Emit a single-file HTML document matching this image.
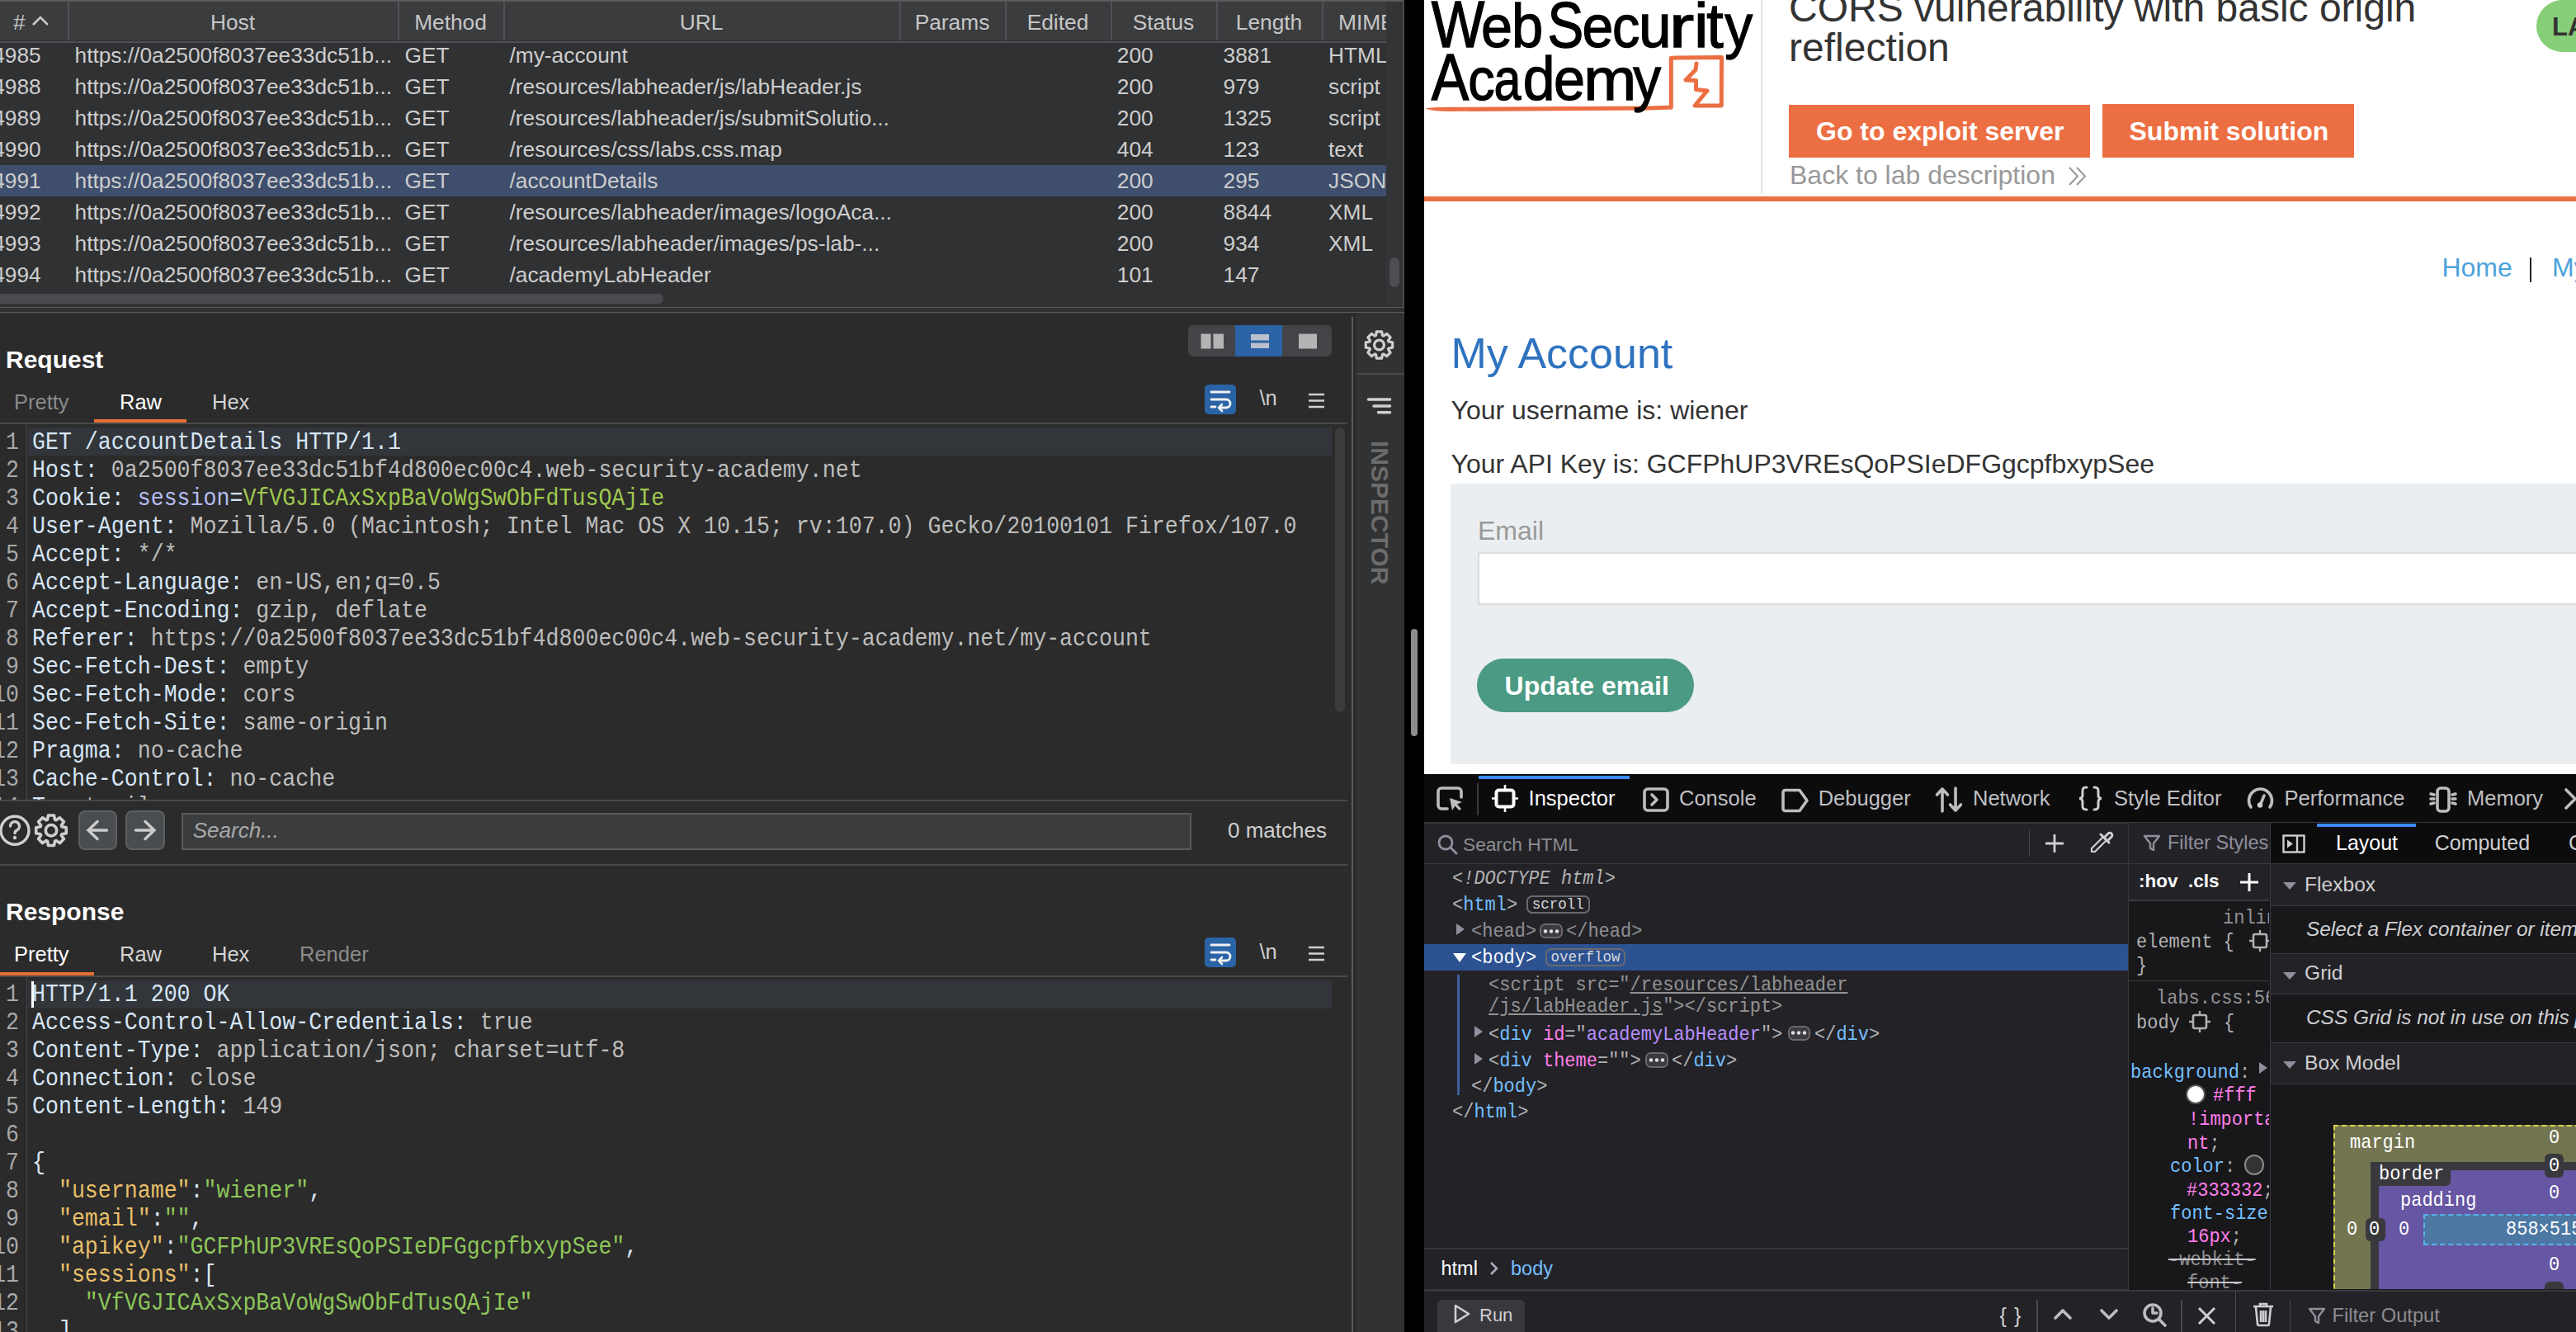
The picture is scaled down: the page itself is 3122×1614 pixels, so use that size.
<!DOCTYPE html>
<html><head><meta charset="utf-8"><style>
html,body{margin:0;padding:0;}
body{width:3122px;height:1614px;position:relative;overflow:hidden;background:#2b2b2b;}
.a{position:absolute;}
.t{position:absolute;white-space:pre;line-height:1;}
.s{font-family:"Liberation Sans", sans-serif;}
.m{font-family:"Liberation Mono", monospace;}
svg{position:absolute;overflow:visible;}
</style></head><body>
<div class="a" style="left:0px;top:0px;width:1702px;height:1614px;background:#2b2b2b;"></div>
<div class="a" style="left:0px;top:0px;width:1702px;height:380px;background:#303133;"></div>
<div class="a" style="left:0px;top:0px;width:1702px;height:2px;background:#5a5b5d;"></div>
<div class="a" style="left:0px;top:2px;width:1680px;height:47px;background:#3b3c3e;"></div>
<div class="a" style="left:0px;top:50px;width:1680px;height:2px;background:#505154;"></div>
<div class="a" style="left:82px;top:2px;width:2px;height:47px;background:#505154;"></div>
<div class="a" style="left:482px;top:2px;width:2px;height:47px;background:#505154;"></div>
<div class="a" style="left:610px;top:2px;width:2px;height:47px;background:#505154;"></div>
<div class="a" style="left:1090px;top:2px;width:2px;height:47px;background:#505154;"></div>
<div class="a" style="left:1218px;top:2px;width:2px;height:47px;background:#505154;"></div>
<div class="a" style="left:1346px;top:2px;width:2px;height:47px;background:#505154;"></div>
<div class="a" style="left:1474px;top:2px;width:2px;height:47px;background:#505154;"></div>
<div class="a" style="left:1602px;top:2px;width:2px;height:47px;background:#505154;"></div>
<div class="a" style="left:1680px;top:2px;width:20px;height:378px;background:#333436;"></div>
<div class="a" style="left:1700px;top:0px;width:2px;height:380px;background:#4a4b4d;"></div>
<div class="t s" style="left:16.00px;top:14.24px;font-size:26.3px;color:#c6c6c6;">#</div>
<svg class="a" style="left:38px;top:18px" width="22" height="14" viewBox="0 0 22 14"><path d="M2 12 L11 3 L20 12" stroke="#c9c9c9" stroke-width="2.6" fill="none"/></svg>
<div class="t s" style="left:82px;width:400px;text-align:center;top:14.24px;font-size:26.3px;color:#c6c6c6">Host</div>
<div class="t s" style="left:482px;width:128px;text-align:center;top:14.24px;font-size:26.3px;color:#c6c6c6">Method</div>
<div class="t s" style="left:610px;width:480px;text-align:center;top:14.24px;font-size:26.3px;color:#c6c6c6">URL</div>
<div class="t s" style="left:1090px;width:128px;text-align:center;top:14.24px;font-size:26.3px;color:#c6c6c6">Params</div>
<div class="t s" style="left:1218px;width:128px;text-align:center;top:14.24px;font-size:26.3px;color:#c6c6c6">Edited</div>
<div class="t s" style="left:1346px;width:128px;text-align:center;top:14.24px;font-size:26.3px;color:#c6c6c6">Status</div>
<div class="t s" style="left:1474px;width:128px;text-align:center;top:14.24px;font-size:26.3px;color:#c6c6c6">Length</div>
<div class="a" style="left:1604px;top:2px;width:76px;height:47px;overflow:hidden"><div class="t s" style="left:18px;top:12.24px;font-size:26.3px;color:#c6c6c6">MIME</div></div>
<div class="a" style="left:0;top:52px;width:1680px;height:304px;overflow:hidden">
<div class="t s" style="left:49.70px;top:1.74px;font-size:26.3px;color:#cdcdcd;left:-550.30px;width:600px;text-align:right;">4985</div>
<div class="t s" style="left:90.50px;top:1.74px;font-size:26.3px;color:#cdcdcd;">https://0a2500f8037ee33dc51b...</div>
<div class="t s" style="left:490.50px;top:1.74px;font-size:26.3px;color:#cdcdcd;">GET</div>
<div class="t s" style="left:617.50px;top:1.74px;font-size:26.3px;color:#cdcdcd;">/my-account</div>
<div class="t s" style="left:1353.75px;top:1.74px;font-size:26.3px;color:#cdcdcd;">200</div>
<div class="t s" style="left:1482.50px;top:1.74px;font-size:26.3px;color:#cdcdcd;">3881</div>
<div class="t s" style="left:1610.00px;top:1.74px;font-size:26.3px;color:#cdcdcd;">HTML</div>
<div class="t s" style="left:49.70px;top:39.74px;font-size:26.3px;color:#cdcdcd;left:-550.30px;width:600px;text-align:right;">4988</div>
<div class="t s" style="left:90.50px;top:39.74px;font-size:26.3px;color:#cdcdcd;">https://0a2500f8037ee33dc51b...</div>
<div class="t s" style="left:490.50px;top:39.74px;font-size:26.3px;color:#cdcdcd;">GET</div>
<div class="t s" style="left:617.50px;top:39.74px;font-size:26.3px;color:#cdcdcd;">/resources/labheader/js/labHeader.js</div>
<div class="t s" style="left:1353.75px;top:39.74px;font-size:26.3px;color:#cdcdcd;">200</div>
<div class="t s" style="left:1482.50px;top:39.74px;font-size:26.3px;color:#cdcdcd;">979</div>
<div class="t s" style="left:1610.00px;top:39.74px;font-size:26.3px;color:#cdcdcd;">script</div>
<div class="t s" style="left:49.70px;top:77.74px;font-size:26.3px;color:#cdcdcd;left:-550.30px;width:600px;text-align:right;">4989</div>
<div class="t s" style="left:90.50px;top:77.74px;font-size:26.3px;color:#cdcdcd;">https://0a2500f8037ee33dc51b...</div>
<div class="t s" style="left:490.50px;top:77.74px;font-size:26.3px;color:#cdcdcd;">GET</div>
<div class="t s" style="left:617.50px;top:77.74px;font-size:26.3px;color:#cdcdcd;">/resources/labheader/js/submitSolutio...</div>
<div class="t s" style="left:1353.75px;top:77.74px;font-size:26.3px;color:#cdcdcd;">200</div>
<div class="t s" style="left:1482.50px;top:77.74px;font-size:26.3px;color:#cdcdcd;">1325</div>
<div class="t s" style="left:1610.00px;top:77.74px;font-size:26.3px;color:#cdcdcd;">script</div>
<div class="t s" style="left:49.70px;top:115.74px;font-size:26.3px;color:#cdcdcd;left:-550.30px;width:600px;text-align:right;">4990</div>
<div class="t s" style="left:90.50px;top:115.74px;font-size:26.3px;color:#cdcdcd;">https://0a2500f8037ee33dc51b...</div>
<div class="t s" style="left:490.50px;top:115.74px;font-size:26.3px;color:#cdcdcd;">GET</div>
<div class="t s" style="left:617.50px;top:115.74px;font-size:26.3px;color:#cdcdcd;">/resources/css/labs.css.map</div>
<div class="t s" style="left:1353.75px;top:115.74px;font-size:26.3px;color:#cdcdcd;">404</div>
<div class="t s" style="left:1482.50px;top:115.74px;font-size:26.3px;color:#cdcdcd;">123</div>
<div class="t s" style="left:1610.00px;top:115.74px;font-size:26.3px;color:#cdcdcd;">text</div>
<div class="a" style="left:0px;top:148px;width:1680px;height:38px;background:#3e4e6c;"></div>
<div class="t s" style="left:49.70px;top:153.74px;font-size:26.3px;color:#cdcdcd;left:-550.30px;width:600px;text-align:right;">4991</div>
<div class="t s" style="left:90.50px;top:153.74px;font-size:26.3px;color:#cdcdcd;">https://0a2500f8037ee33dc51b...</div>
<div class="t s" style="left:490.50px;top:153.74px;font-size:26.3px;color:#cdcdcd;">GET</div>
<div class="t s" style="left:617.50px;top:153.74px;font-size:26.3px;color:#cdcdcd;">/accountDetails</div>
<div class="t s" style="left:1353.75px;top:153.74px;font-size:26.3px;color:#cdcdcd;">200</div>
<div class="t s" style="left:1482.50px;top:153.74px;font-size:26.3px;color:#cdcdcd;">295</div>
<div class="t s" style="left:1610.00px;top:153.74px;font-size:26.3px;color:#cdcdcd;">JSON</div>
<div class="t s" style="left:49.70px;top:191.74px;font-size:26.3px;color:#cdcdcd;left:-550.30px;width:600px;text-align:right;">4992</div>
<div class="t s" style="left:90.50px;top:191.74px;font-size:26.3px;color:#cdcdcd;">https://0a2500f8037ee33dc51b...</div>
<div class="t s" style="left:490.50px;top:191.74px;font-size:26.3px;color:#cdcdcd;">GET</div>
<div class="t s" style="left:617.50px;top:191.74px;font-size:26.3px;color:#cdcdcd;">/resources/labheader/images/logoAca...</div>
<div class="t s" style="left:1353.75px;top:191.74px;font-size:26.3px;color:#cdcdcd;">200</div>
<div class="t s" style="left:1482.50px;top:191.74px;font-size:26.3px;color:#cdcdcd;">8844</div>
<div class="t s" style="left:1610.00px;top:191.74px;font-size:26.3px;color:#cdcdcd;">XML</div>
<div class="t s" style="left:49.70px;top:229.74px;font-size:26.3px;color:#cdcdcd;left:-550.30px;width:600px;text-align:right;">4993</div>
<div class="t s" style="left:90.50px;top:229.74px;font-size:26.3px;color:#cdcdcd;">https://0a2500f8037ee33dc51b...</div>
<div class="t s" style="left:490.50px;top:229.74px;font-size:26.3px;color:#cdcdcd;">GET</div>
<div class="t s" style="left:617.50px;top:229.74px;font-size:26.3px;color:#cdcdcd;">/resources/labheader/images/ps-lab-...</div>
<div class="t s" style="left:1353.75px;top:229.74px;font-size:26.3px;color:#cdcdcd;">200</div>
<div class="t s" style="left:1482.50px;top:229.74px;font-size:26.3px;color:#cdcdcd;">934</div>
<div class="t s" style="left:1610.00px;top:229.74px;font-size:26.3px;color:#cdcdcd;">XML</div>
<div class="t s" style="left:49.70px;top:267.74px;font-size:26.3px;color:#cdcdcd;left:-550.30px;width:600px;text-align:right;">4994</div>
<div class="t s" style="left:90.50px;top:267.74px;font-size:26.3px;color:#cdcdcd;">https://0a2500f8037ee33dc51b...</div>
<div class="t s" style="left:490.50px;top:267.74px;font-size:26.3px;color:#cdcdcd;">GET</div>
<div class="t s" style="left:617.50px;top:267.74px;font-size:26.3px;color:#cdcdcd;">/academyLabHeader</div>
<div class="t s" style="left:1353.75px;top:267.74px;font-size:26.3px;color:#cdcdcd;">101</div>
<div class="t s" style="left:1482.50px;top:267.74px;font-size:26.3px;color:#cdcdcd;">147</div>
<div class="t s" style="left:1610.00px;top:267.74px;font-size:26.3px;color:#cdcdcd;"></div>
</div>
<div class="a" style="left:0px;top:356px;width:804px;height:12px;background:#4a4b4e;border-radius:0 6px 6px 0;"></div>
<div class="a" style="left:1684px;top:312px;width:12px;height:36px;background:#4d4e51;border-radius:6px;"></div>
<div class="a" style="left:0px;top:372px;width:1702px;height:1px;background:#58595b;"></div>
<div class="a" style="left:0px;top:378px;width:1702px;height:1px;background:#58595b;"></div>
<div class="a" style="left:0px;top:373px;width:1702px;height:5px;background:#303133;"></div>
<div class="t s" style="left:7.00px;top:420.61px;font-size:30px;color:#ffffff;font-weight:bold;">Request</div>
<div class="a" style="left:1440px;top:393.5px;width:174px;height:38px;background:#434447;border-radius:6px;"></div>
<div class="a" style="left:1497px;top:393.5px;width:57px;height:38px;background:#2b63a6;"></div>
<svg class="a" style="left:1440px;top:393px" width="174" height="38"><rect x="15.5" y="11.5" width="12" height="18" fill="#b4b4b4"/><rect x="30.5" y="11.5" width="12.5" height="18" fill="#b4b4b4"/><rect x="76" y="12" width="22" height="7.5" fill="#b9c0cc"/><rect x="76" y="22.5" width="22" height="6.5" fill="#b9c0cc"/><rect x="134" y="11.5" width="22" height="18" fill="#b4b4b4"/></svg>
<div class="t s" style="left:17.00px;top:475.41px;font-size:25.5px;color:#8a8a8a;">Pretty</div>
<div class="t s" style="left:145.00px;top:475.41px;font-size:25.5px;color:#ffffff;">Raw</div>
<div class="t s" style="left:257.00px;top:475.41px;font-size:25.5px;color:#d4d4d4;">Hex</div>
<div class="a" style="left:114px;top:508px;width:112px;height:4px;background:#e56f33;"></div>
<div class="a" style="left:0px;top:512px;width:1633px;height:2px;background:#4a4a4a;"></div>
<svg class="a" style="left:1460px;top:465.5px" width="38" height="36" viewBox="0 0 38 36"><rect x="0" y="0" width="38" height="36" rx="5" fill="#2a64a7"/><path d="M8 9 H30 M8 18 H26 a5 5 0 0 1 0 10 H18 M8 27 H13" stroke="#f0f0f0" stroke-width="2.8" fill="none" stroke-linecap="round"/><path d="M21 24 L17 28 L21 32" stroke="#f0f0f0" stroke-width="2.6" fill="none" stroke-linecap="round" stroke-linejoin="round"/></svg>
<div class="t s" style="left:1526.50px;top:470.41px;font-size:25.5px;color:#cfcfcf;">\n</div>
<svg class="a" style="left:1584.5px;top:475.5px" width="21" height="19" viewBox="0 0 21 19"><path d="M1 2 H20 M1 9.5 H20 M1 17 H20" stroke="#cfcfcf" stroke-width="2.6" fill="none"/></svg>
<div class="a" style="left:34px;top:518px;width:1580px;height:34px;background:#32363a;"></div>
<div class="a" style="left:32px;top:514px;width:1px;height:456px;background:#474747;"></div>
<div class="a" style="left:1618px;top:518px;width:12px;height:345px;background:#3b3b3b;border-radius:6px;"></div>
<div class="a" style="left:0;top:514px;width:1616px;height:456px;overflow:hidden">
<div class="t m" style="left:23.00px;top:8.14px;font-size:29.5px;color:#a8a8a8;left:-577.00px;width:600px;text-align:right;transform:scaleX(0.9017);transform-origin:100% 0;">1</div>
<div class="t m" style="left:38.75px;top:8.14px;font-size:29.5px;color:#bdbdbd;transform:scaleX(0.9017);transform-origin:0 0;"><span style="color:#d6e5f6">GET /accountDetails HTTP/1.1</span></div>
<div class="t m" style="left:23.00px;top:42.14px;font-size:29.5px;color:#a8a8a8;left:-577.00px;width:600px;text-align:right;transform:scaleX(0.9017);transform-origin:100% 0;">2</div>
<div class="t m" style="left:38.75px;top:42.14px;font-size:29.5px;color:#bdbdbd;transform:scaleX(0.9017);transform-origin:0 0;"><span style="color:#d6e5f6">Host: </span><span style="color:#bdbdbd">0a2500f8037ee33dc51bf4d800ec00c4.web-security-academy.net</span></div>
<div class="t m" style="left:23.00px;top:76.14px;font-size:29.5px;color:#a8a8a8;left:-577.00px;width:600px;text-align:right;transform:scaleX(0.9017);transform-origin:100% 0;">3</div>
<div class="t m" style="left:38.75px;top:76.14px;font-size:29.5px;color:#bdbdbd;transform:scaleX(0.9017);transform-origin:0 0;"><span style="color:#d6e5f6">Cookie: </span><span style="color:#b4bcf2">session</span><span style="color:#d6e5f6">=</span><span style="color:#9fc84f">VfVGJICAxSxpBaVoWgSwObFdTusQAjIe</span></div>
<div class="t m" style="left:23.00px;top:110.14px;font-size:29.5px;color:#a8a8a8;left:-577.00px;width:600px;text-align:right;transform:scaleX(0.9017);transform-origin:100% 0;">4</div>
<div class="t m" style="left:38.75px;top:110.14px;font-size:29.5px;color:#bdbdbd;transform:scaleX(0.9017);transform-origin:0 0;"><span style="color:#d6e5f6">User-Agent: </span><span style="color:#bdbdbd">Mozilla/5.0 (Macintosh; Intel Mac OS X 10.15; rv:107.0) Gecko/20100101 Firefox/107.0</span></div>
<div class="t m" style="left:23.00px;top:144.14px;font-size:29.5px;color:#a8a8a8;left:-577.00px;width:600px;text-align:right;transform:scaleX(0.9017);transform-origin:100% 0;">5</div>
<div class="t m" style="left:38.75px;top:144.14px;font-size:29.5px;color:#bdbdbd;transform:scaleX(0.9017);transform-origin:0 0;"><span style="color:#d6e5f6">Accept: </span><span style="color:#bdbdbd">*/*</span></div>
<div class="t m" style="left:23.00px;top:178.14px;font-size:29.5px;color:#a8a8a8;left:-577.00px;width:600px;text-align:right;transform:scaleX(0.9017);transform-origin:100% 0;">6</div>
<div class="t m" style="left:38.75px;top:178.14px;font-size:29.5px;color:#bdbdbd;transform:scaleX(0.9017);transform-origin:0 0;"><span style="color:#d6e5f6">Accept-Language: </span><span style="color:#bdbdbd">en-US,en;q=0.5</span></div>
<div class="t m" style="left:23.00px;top:212.14px;font-size:29.5px;color:#a8a8a8;left:-577.00px;width:600px;text-align:right;transform:scaleX(0.9017);transform-origin:100% 0;">7</div>
<div class="t m" style="left:38.75px;top:212.14px;font-size:29.5px;color:#bdbdbd;transform:scaleX(0.9017);transform-origin:0 0;"><span style="color:#d6e5f6">Accept-Encoding: </span><span style="color:#bdbdbd">gzip, deflate</span></div>
<div class="t m" style="left:23.00px;top:246.14px;font-size:29.5px;color:#a8a8a8;left:-577.00px;width:600px;text-align:right;transform:scaleX(0.9017);transform-origin:100% 0;">8</div>
<div class="t m" style="left:38.75px;top:246.14px;font-size:29.5px;color:#bdbdbd;transform:scaleX(0.9017);transform-origin:0 0;"><span style="color:#d6e5f6">Referer: </span><span style="color:#bdbdbd">https://0a2500f8037ee33dc51bf4d800ec00c4.web-security-academy.net/my-account</span></div>
<div class="t m" style="left:23.00px;top:280.14px;font-size:29.5px;color:#a8a8a8;left:-577.00px;width:600px;text-align:right;transform:scaleX(0.9017);transform-origin:100% 0;">9</div>
<div class="t m" style="left:38.75px;top:280.14px;font-size:29.5px;color:#bdbdbd;transform:scaleX(0.9017);transform-origin:0 0;"><span style="color:#d6e5f6">Sec-Fetch-Dest: </span><span style="color:#bdbdbd">empty</span></div>
<div class="t m" style="left:23.00px;top:314.14px;font-size:29.5px;color:#a8a8a8;left:-577.00px;width:600px;text-align:right;transform:scaleX(0.9017);transform-origin:100% 0;">10</div>
<div class="t m" style="left:38.75px;top:314.14px;font-size:29.5px;color:#bdbdbd;transform:scaleX(0.9017);transform-origin:0 0;"><span style="color:#d6e5f6">Sec-Fetch-Mode: </span><span style="color:#bdbdbd">cors</span></div>
<div class="t m" style="left:23.00px;top:348.14px;font-size:29.5px;color:#a8a8a8;left:-577.00px;width:600px;text-align:right;transform:scaleX(0.9017);transform-origin:100% 0;">11</div>
<div class="t m" style="left:38.75px;top:348.14px;font-size:29.5px;color:#bdbdbd;transform:scaleX(0.9017);transform-origin:0 0;"><span style="color:#d6e5f6">Sec-Fetch-Site: </span><span style="color:#bdbdbd">same-origin</span></div>
<div class="t m" style="left:23.00px;top:382.14px;font-size:29.5px;color:#a8a8a8;left:-577.00px;width:600px;text-align:right;transform:scaleX(0.9017);transform-origin:100% 0;">12</div>
<div class="t m" style="left:38.75px;top:382.14px;font-size:29.5px;color:#bdbdbd;transform:scaleX(0.9017);transform-origin:0 0;"><span style="color:#d6e5f6">Pragma: </span><span style="color:#bdbdbd">no-cache</span></div>
<div class="t m" style="left:23.00px;top:416.14px;font-size:29.5px;color:#a8a8a8;left:-577.00px;width:600px;text-align:right;transform:scaleX(0.9017);transform-origin:100% 0;">13</div>
<div class="t m" style="left:38.75px;top:416.14px;font-size:29.5px;color:#bdbdbd;transform:scaleX(0.9017);transform-origin:0 0;"><span style="color:#d6e5f6">Cache-Control: </span><span style="color:#bdbdbd">no-cache</span></div>
<div class="t m" style="left:23.00px;top:450.14px;font-size:29.5px;color:#a8a8a8;left:-577.00px;width:600px;text-align:right;transform:scaleX(0.9017);transform-origin:100% 0;">14</div>
<div class="t m" style="left:38.75px;top:450.14px;font-size:29.5px;color:#bdbdbd;transform:scaleX(0.9017);transform-origin:0 0;"><span style="color:#d6e5f6">Te: </span><span style="color:#bdbdbd">trailers</span></div>
</div>
<div class="a" style="left:0px;top:969px;width:1633px;height:2px;background:#4a4a4a;"></div>
<svg class="a" style="left:0;top:985px" width="90" height="42"><circle cx="18" cy="21.2" r="17" stroke="#cfcfcf" stroke-width="3.4" fill="none"/><path d="M12.5 16 a5.5 5.5 0 1 1 8 5 c-2 1 -2.5 1.5 -2.5 3.5" stroke="#cfcfcf" stroke-width="3.4" fill="none" stroke-linecap="round"/><circle cx="18" cy="30" r="2.2" fill="#cfcfcf"/><path d="M57.52 8.19 L58.45 2.94 L65.55 2.94 L66.48 8.19 L68.03 8.83 L72.40 5.78 L77.42 10.80 L74.37 15.17 L75.01 16.72 L80.26 17.65 L80.26 24.75 L75.01 25.68 L74.37 27.23 L77.42 31.60 L72.40 36.62 L68.03 33.57 L66.48 34.21 L65.55 39.46 L58.45 39.46 L57.52 34.21 L55.97 33.57 L51.60 36.62 L46.58 31.60 L49.63 27.23 L48.99 25.68 L43.74 24.75 L43.74 17.65 L48.99 16.72 L49.63 15.17 L46.58 10.80 L51.60 5.78 L55.97 8.83Z" stroke="#cfcfcf" stroke-width="3.6" fill="none" stroke-linejoin="round"/><circle cx="62" cy="21.2" r="6.70" stroke="#cfcfcf" stroke-width="3.6" fill="none"/></svg>
<div class="a" style="left:94.5px;top:982px;width:47px;height:47.5px;background:#4a4d50;border-radius:8px;border:2px solid #5c5e60;box-sizing:border-box;"></div>
<div class="a" style="left:152px;top:982px;width:47.5px;height:47.5px;background:#4a4d50;border-radius:8px;border:2px solid #5c5e60;box-sizing:border-box;"></div>
<svg class="a" style="left:94px;top:982px" width="106" height="48"><path d="M35.5 24 H13 M24 13.5 L13 24 L24 34.5" stroke="#cccccc" stroke-width="3.4" fill="none" stroke-linecap="round"/><path d="M70.5 24 H93 M82 13.5 L93 24 L82 34.5" stroke="#cccccc" stroke-width="3.4" fill="none" stroke-linecap="round"/></svg>
<div class="a" style="left:220px;top:984.5px;width:1224px;height:45px;background:#3b3c3e;border:2px solid #5b5b5b;box-sizing:border-box;"></div>
<div class="t s" style="left:233.75px;top:992.99px;font-size:26px;color:#a9a9a9;font-style:italic;">Search...</div>
<div class="t s" style="left:1488.00px;top:993.49px;font-size:26px;color:#cfcfcf;">0 matches</div>
<div class="a" style="left:0px;top:1047px;width:1633px;height:2px;background:#4a4a4a;"></div>
<div class="t s" style="left:7.00px;top:1090.11px;font-size:30px;color:#ffffff;font-weight:bold;">Response</div>
<div class="t s" style="left:17.00px;top:1144.41px;font-size:25.5px;color:#ffffff;">Pretty</div>
<div class="t s" style="left:145.00px;top:1144.41px;font-size:25.5px;color:#d4d4d4;">Raw</div>
<div class="t s" style="left:257.00px;top:1144.41px;font-size:25.5px;color:#d4d4d4;">Hex</div>
<div class="t s" style="left:363.00px;top:1144.41px;font-size:25.5px;color:#8a8a8a;">Render</div>
<div class="a" style="left:0px;top:1178px;width:114px;height:4px;background:#e56f33;"></div>
<div class="a" style="left:0px;top:1182px;width:1633px;height:2px;background:#4a4a4a;"></div>
<svg class="a" style="left:1460px;top:1136px" width="38" height="36" viewBox="0 0 38 36"><rect x="0" y="0" width="38" height="36" rx="5" fill="#2a64a7"/><path d="M8 9 H30 M8 18 H26 a5 5 0 0 1 0 10 H18 M8 27 H13" stroke="#f0f0f0" stroke-width="2.8" fill="none" stroke-linecap="round"/><path d="M21 24 L17 28 L21 32" stroke="#f0f0f0" stroke-width="2.6" fill="none" stroke-linecap="round" stroke-linejoin="round"/></svg>
<div class="t s" style="left:1526.50px;top:1140.91px;font-size:25.5px;color:#cfcfcf;">\n</div>
<svg class="a" style="left:1584.5px;top:1146px" width="21" height="19" viewBox="0 0 21 19"><path d="M1 2 H20 M1 9.5 H20 M1 17 H20" stroke="#cfcfcf" stroke-width="2.6" fill="none"/></svg>
<div class="a" style="left:34px;top:1188px;width:1580px;height:34px;background:#32363a;"></div>
<div class="a" style="left:32px;top:1184px;width:1px;height:430px;background:#474747;"></div>
<div class="t m" style="left:23.00px;top:1191.39px;font-size:29.5px;color:#a8a8a8;left:-577.00px;width:600px;text-align:right;transform:scaleX(0.9017);transform-origin:100% 0;">1</div>
<div class="t m" style="left:38.75px;top:1191.39px;font-size:29.5px;color:#bdbdbd;transform:scaleX(0.9017);transform-origin:0 0;"><span style="color:#d6e5f6">HTTP/1.1 200 OK</span></div>
<div class="t m" style="left:23.00px;top:1225.39px;font-size:29.5px;color:#a8a8a8;left:-577.00px;width:600px;text-align:right;transform:scaleX(0.9017);transform-origin:100% 0;">2</div>
<div class="t m" style="left:38.75px;top:1225.39px;font-size:29.5px;color:#bdbdbd;transform:scaleX(0.9017);transform-origin:0 0;"><span style="color:#d6e5f6">Access-Control-Allow-Credentials: </span><span style="color:#bdbdbd">true</span></div>
<div class="t m" style="left:23.00px;top:1259.39px;font-size:29.5px;color:#a8a8a8;left:-577.00px;width:600px;text-align:right;transform:scaleX(0.9017);transform-origin:100% 0;">3</div>
<div class="t m" style="left:38.75px;top:1259.39px;font-size:29.5px;color:#bdbdbd;transform:scaleX(0.9017);transform-origin:0 0;"><span style="color:#d6e5f6">Content-Type: </span><span style="color:#bdbdbd">application/json; charset=utf-8</span></div>
<div class="t m" style="left:23.00px;top:1293.39px;font-size:29.5px;color:#a8a8a8;left:-577.00px;width:600px;text-align:right;transform:scaleX(0.9017);transform-origin:100% 0;">4</div>
<div class="t m" style="left:38.75px;top:1293.39px;font-size:29.5px;color:#bdbdbd;transform:scaleX(0.9017);transform-origin:0 0;"><span style="color:#d6e5f6">Connection: </span><span style="color:#bdbdbd">close</span></div>
<div class="t m" style="left:23.00px;top:1327.39px;font-size:29.5px;color:#a8a8a8;left:-577.00px;width:600px;text-align:right;transform:scaleX(0.9017);transform-origin:100% 0;">5</div>
<div class="t m" style="left:38.75px;top:1327.39px;font-size:29.5px;color:#bdbdbd;transform:scaleX(0.9017);transform-origin:0 0;"><span style="color:#d6e5f6">Content-Length: </span><span style="color:#bdbdbd">149</span></div>
<div class="t m" style="left:23.00px;top:1361.39px;font-size:29.5px;color:#a8a8a8;left:-577.00px;width:600px;text-align:right;transform:scaleX(0.9017);transform-origin:100% 0;">6</div>
<div class="t m" style="left:38.75px;top:1361.39px;font-size:29.5px;color:#bdbdbd;transform:scaleX(0.9017);transform-origin:0 0;"></div>
<div class="t m" style="left:23.00px;top:1395.39px;font-size:29.5px;color:#a8a8a8;left:-577.00px;width:600px;text-align:right;transform:scaleX(0.9017);transform-origin:100% 0;">7</div>
<div class="t m" style="left:38.75px;top:1395.39px;font-size:29.5px;color:#bdbdbd;transform:scaleX(0.9017);transform-origin:0 0;"><span style="color:#dbe6f4">{</span></div>
<div class="t m" style="left:23.00px;top:1429.39px;font-size:29.5px;color:#a8a8a8;left:-577.00px;width:600px;text-align:right;transform:scaleX(0.9017);transform-origin:100% 0;">8</div>
<div class="t m" style="left:38.75px;top:1429.39px;font-size:29.5px;color:#bdbdbd;transform:scaleX(0.9017);transform-origin:0 0;"><span style="color:#dbe6f4">  </span><span style="color:#e8bf6a">&quot;username&quot;</span><span style="color:#dbe6f4">:</span><span style="color:#8ec65a">&quot;wiener&quot;</span><span style="color:#dbe6f4">,</span></div>
<div class="t m" style="left:23.00px;top:1463.39px;font-size:29.5px;color:#a8a8a8;left:-577.00px;width:600px;text-align:right;transform:scaleX(0.9017);transform-origin:100% 0;">9</div>
<div class="t m" style="left:38.75px;top:1463.39px;font-size:29.5px;color:#bdbdbd;transform:scaleX(0.9017);transform-origin:0 0;"><span style="color:#dbe6f4">  </span><span style="color:#e8bf6a">&quot;email&quot;</span><span style="color:#dbe6f4">:</span><span style="color:#8ec65a">&quot;&quot;</span><span style="color:#dbe6f4">,</span></div>
<div class="t m" style="left:23.00px;top:1497.39px;font-size:29.5px;color:#a8a8a8;left:-577.00px;width:600px;text-align:right;transform:scaleX(0.9017);transform-origin:100% 0;">10</div>
<div class="t m" style="left:38.75px;top:1497.39px;font-size:29.5px;color:#bdbdbd;transform:scaleX(0.9017);transform-origin:0 0;"><span style="color:#dbe6f4">  </span><span style="color:#e8bf6a">&quot;apikey&quot;</span><span style="color:#dbe6f4">:</span><span style="color:#8ec65a">&quot;GCFPhUP3VREsQoPSIeDFGgcpfbxypSee&quot;</span><span style="color:#dbe6f4">,</span></div>
<div class="t m" style="left:23.00px;top:1531.39px;font-size:29.5px;color:#a8a8a8;left:-577.00px;width:600px;text-align:right;transform:scaleX(0.9017);transform-origin:100% 0;">11</div>
<div class="t m" style="left:38.75px;top:1531.39px;font-size:29.5px;color:#bdbdbd;transform:scaleX(0.9017);transform-origin:0 0;"><span style="color:#dbe6f4">  </span><span style="color:#e8bf6a">&quot;sessions&quot;</span><span style="color:#dbe6f4">:</span><span style="color:#dbe6f4">[</span></div>
<div class="t m" style="left:23.00px;top:1565.39px;font-size:29.5px;color:#a8a8a8;left:-577.00px;width:600px;text-align:right;transform:scaleX(0.9017);transform-origin:100% 0;">12</div>
<div class="t m" style="left:38.75px;top:1565.39px;font-size:29.5px;color:#bdbdbd;transform:scaleX(0.9017);transform-origin:0 0;"><span style="color:#dbe6f4">    </span><span style="color:#8ec65a">&quot;VfVGJICAxSxpBaVoWgSwObFdTusQAjIe&quot;</span></div>
<div class="t m" style="left:23.00px;top:1599.39px;font-size:29.5px;color:#a8a8a8;left:-577.00px;width:600px;text-align:right;transform:scaleX(0.9017);transform-origin:100% 0;">13</div>
<div class="t m" style="left:38.75px;top:1599.39px;font-size:29.5px;color:#bdbdbd;transform:scaleX(0.9017);transform-origin:0 0;"><span style="color:#dbe6f4">  ]</span></div>
<div class="a" style="left:38px;top:1189px;width:3px;height:32px;background:#ffffff;"></div>
<div class="a" style="left:1644px;top:380px;width:58px;height:1234px;background:#313234;"></div>
<div class="a" style="left:1638px;top:383.5px;width:1.5px;height:1230.5px;background:#5a5a5a;"></div>
<svg class="a" style="left:1650px;top:396px" width="44" height="44"><path d="M17.52 10.46 L18.35 5.80 L24.65 5.80 L25.48 10.46 L26.85 11.03 L30.73 8.32 L35.18 12.77 L32.47 16.65 L33.04 18.02 L37.70 18.85 L37.70 25.15 L33.04 25.98 L32.47 27.35 L35.18 31.23 L30.73 35.68 L26.85 32.97 L25.48 33.54 L24.65 38.20 L18.35 38.20 L17.52 33.54 L16.15 32.97 L12.27 35.68 L7.82 31.23 L10.53 27.35 L9.96 25.98 L5.30 25.15 L5.30 18.85 L9.96 18.02 L10.53 16.65 L7.82 12.77 L12.27 8.32 L16.15 11.03Z" stroke="#cfcfcf" stroke-width="3.2" fill="none" stroke-linejoin="round"/><circle cx="21.5" cy="22" r="5.94" stroke="#cfcfcf" stroke-width="3.2" fill="none"/></svg>
<div class="a" style="left:1644px;top:452px;width:58px;height:2px;background:#4a4a4a;"></div>
<svg class="a" style="left:1656px;top:481px" width="32" height="22"><path d="M2.5 3 H28.5 M9 11 H28.5 M14.5 18.8 H28.5" stroke="#cfcfcf" stroke-width="3.6" fill="none" stroke-linecap="round"/></svg>
<div class="t s" style="left:1660px;top:534px;width:25px;height:175px;font-size:30px;font-weight:bold;color:#6c6c6c;writing-mode:vertical-rl;line-height:25px;letter-spacing:0px">INSPECTOR</div>
<div class="a" style="left:1702px;top:0px;width:24px;height:1614px;background:#000000;"></div>
<div class="a" style="left:1710px;top:762px;width:8px;height:130px;background:#8c8c8c;border-radius:4px;"></div>
<div class="a" style="left:1726px;top:0px;width:1396px;height:938px;background:#ffffff;"></div>
<svg class="a" style="left:0;top:0" width="3122" height="240"><path d="M1727 131.5 Q1735 129.6 1760 129.8 L2000 128.6 L2026 127.6 L2026.5 132.6 L2000 133.4 L1760 135 Q1738 135.2 1727 131.5 Z" fill="#ec6f43"/><path d="M2025.3 130 L2025.3 70.2 L2086.5 69.5 L2086.3 128 L2054 128 L2069 110 L2055.5 108.5 L2055.5 97.5 L2043 97 L2055 84.5 L2056 77" stroke="#ec6f43" stroke-width="5" fill="none" stroke-linejoin="round" stroke-linecap="round"/><g font-family="Liberation Sans" font-size="80" fill="#000" stroke="#000" stroke-width="1.4"><text transform="translate(1734.40 56.50) scale(0.8547 0.9849)" x="0.35" y="0">W</text><text transform="translate(1797.30 56.50) scale(0.8552 0.9075)" x="-2.70" y="0">e</text><text transform="translate(1835.80 56.50) scale(0.8588 0.9358)" x="-4.46" y="0">b</text><text transform="translate(1877.90 56.50) scale(0.8197 0.9804)" x="-2.93" y="0">S</text><text transform="translate(1919.90 56.50) scale(0.8500 0.9075)" x="-2.70" y="0">e</text><text transform="translate(1956.20 56.50) scale(0.8331 0.9075)" x="-2.70" y="0">c</text><text transform="translate(1989.90 56.50) scale(0.8902 0.9170)" x="-4.50" y="0">u</text><text transform="translate(2028.00 56.50) scale(1.1449 0.9075)" x="-4.61" y="0">r</text><text transform="translate(2057.80 56.50) scale(0.9607 0.9426)" x="-4.65" y="0">i</text><text transform="translate(2068.60 56.50) scale(0.9208 0.9577)" x="-0.51" y="0">t</text><text transform="translate(2089.90 56.50) scale(0.8478 0.9170)" x="0.50" y="0">y</text><text transform="translate(1734.20 121.40) scale(0.8522 0.9849)" x="0.54" y="0">A</text><text transform="translate(1781.50 121.40) scale(0.8108 0.9121)" x="-2.70" y="0">c</text><text transform="translate(1812.40 121.40) scale(0.7413 0.9121)" x="-2.70" y="0">a</text><text transform="translate(1848.10 121.40) scale(0.8722 0.9358)" x="-2.66" y="0">d</text><text transform="translate(1885.20 121.40) scale(0.8552 0.9121)" x="-2.70" y="0">e</text><text transform="translate(1923.60 121.40) scale(0.9608 0.9121)" x="-4.61" y="0">m</text><text transform="translate(1978.80 121.40) scale(0.8453 0.9286)" x="0.50" y="0">y</text></g></svg>
<div class="a" style="left:2134px;top:0px;width:2px;height:235px;background:#e2e2e2;"></div>
<div class="t s" style="left:2168.00px;top:-13.63px;font-size:48px;color:#333333;">CORS vulnerability with basic origin</div>
<div class="t s" style="left:2168.00px;top:33.87px;font-size:48px;color:#333333;">reflection</div>
<div class="a" style="left:2168px;top:127px;width:365px;height:63.5px;background:#ec6f43;"></div>
<div class="a" style="left:2548px;top:126px;width:305px;height:64.5px;background:#ec6f43;"></div>
<div class="t s" style="left:2201.00px;top:142.91px;font-size:32px;color:#ffffff;font-weight:bold;">Go to exploit server</div>
<div class="t s" style="left:2580.50px;top:142.91px;font-size:32px;color:#ffffff;font-weight:bold;">Submit solution</div>
<div class="t s" style="left:2169.00px;top:195.91px;font-size:32px;color:#999999;">Back to lab description</div>
<svg class="a" style="left:2506px;top:200px" width="28" height="28"><path d="M2 3 L12 13.5 L2 24 M11 3 L21 13.5 L11 24" stroke="#999" stroke-width="2" fill="none"/></svg>
<div class="a" style="left:1726px;top:238px;width:1396px;height:6px;background:#ec6f43;"></div>
<div class="a" style="left:3074px;top:0px;width:100px;height:63px;background:#86cf78;border-radius:32px;"></div>
<div class="t s" style="left:3093.00px;top:16.56px;font-size:31px;color:#333333;font-weight:bold;">LA</div>
<div class="t s" style="left:2959.40px;top:307.91px;font-size:32px;color:#4ca3dc;">Home</div>
<div class="a" style="left:3065.5px;top:312px;width:2.5px;height:29.5px;background:#222222;"></div>
<div class="t s" style="left:3093.00px;top:307.91px;font-size:32px;color:#4ca3dc;">My account</div>
<div class="t s" style="left:1758.50px;top:401.98px;font-size:52px;color:#2f73bf;">My Account</div>
<div class="t s" style="left:1758.50px;top:480.91px;font-size:32px;color:#333333;">Your username is: wiener</div>
<div class="t s" style="left:1758.50px;top:546.41px;font-size:32px;color:#333333;">Your API Key is: GCFPhUP3VREsQoPSIeDFGgcpfbxypSee</div>
<div class="a" style="left:1758px;top:586px;width:1364px;height:340px;background:#ebeef0;"></div>
<div class="t s" style="left:1791.00px;top:626.61px;font-size:32px;color:#999999;">Email</div>
<div class="a" style="left:1790.5px;top:668.5px;width:1400px;height:64.5px;background:#ffffff;border:2px solid #dcdcdc;box-sizing:border-box;"></div>
<div class="a" style="left:1790px;top:798px;width:263px;height:65px;background:#4a9a84;border-radius:33px;"></div>
<div class="t s" style="left:1823.60px;top:814.91px;font-size:32px;color:#ffffff;font-weight:bold;">Update email</div>
<div class="a" style="left:1726px;top:938px;width:1396px;height:676px;background:#232327;"></div>
<div class="a" style="left:1726px;top:938px;width:1396px;height:58px;background:#0c0c0d;"></div>
<div class="a" style="left:1726px;top:996px;width:1396px;height:1.5px;background:#38383d;"></div>
<div class="a" style="left:1792px;top:939.5px;width:183px;height:4.5px;background:#3c8aff;"></div>
<svg class="a" style="left:1741px;top:953px" width="34" height="32" viewBox="0 0 34 32"><path d="M13 27 H6 a4 4 0 0 1 -4 -4 V6 a4 4 0 0 1 4 -4 H26 a4 4 0 0 1 4 4 V13" stroke="#bdbdc0" stroke-width="3.6" fill="none" stroke-linecap="round" stroke-linejoin="round"/><path d="M16 14 L31 19 L25 21.5 L30 27 L27.5 29 L22.5 23.5 L19 29 Z" fill="#bdbdc0"/></svg>
<div class="a" style="left:1790px;top:948.5px;width:1.5px;height:39px;background:#3a3a3e;"></div>
<svg class="a" style="left:1808px;top:951px" width="33" height="34" viewBox="0 0 33 34"><rect x="5.5" y="6.5" width="21" height="20" rx="3" stroke="#fbfbfe" stroke-width="4" fill="none"/><path d="M16 0 V6 M16 27 V33 M0 16.5 H5 M27 16.5 H32" stroke="#fbfbfe" stroke-width="2.6"/></svg>
<div class="t s" style="left:1852.60px;top:955.41px;font-size:25.5px;color:#fbfbfe;">Inspector</div>
<svg class="a" style="left:1991px;top:954px" width="32" height="30" viewBox="0 0 32 30"><rect x="2" y="2" width="28" height="26" rx="4" stroke="#bdbdc0" stroke-width="3.6" fill="none" stroke-linecap="round" stroke-linejoin="round"/><path d="M11 9 L17 15 L11 21" stroke="#bdbdc0" stroke-width="3.6" fill="none" stroke-linecap="round" stroke-linejoin="round"/></svg>
<div class="t s" style="left:2035.00px;top:955.41px;font-size:25.5px;color:#bfbfc2;">Console</div>
<svg class="a" style="left:2159px;top:956px" width="33" height="29" viewBox="0 0 33 29"><path d="M2 4 a2.5 2.5 0 0 1 2.5 -2.5 H22 L31 14 L22 26.5 H4.5 a2.5 2.5 0 0 1 -2.5 -2.5 Z" stroke="#bdbdc0" stroke-width="3.6" fill="none" stroke-linecap="round" stroke-linejoin="round"/></svg>
<div class="t s" style="left:2203.70px;top:955.41px;font-size:25.5px;color:#bfbfc2;">Debugger</div>
<svg class="a" style="left:2346px;top:953px" width="32" height="32" viewBox="0 0 32 32"><path d="M8 30 V3 M1.5 10 L8 3 L14.5 10 M24 2 V29 M17.5 22 L24 29 L30.5 22" stroke="#bdbdc0" stroke-width="3.6" fill="none" stroke-linecap="round" stroke-linejoin="round"/></svg>
<div class="t s" style="left:2391.00px;top:955.41px;font-size:25.5px;color:#bfbfc2;">Network</div>
<svg class="a" style="left:2517.5px;top:952px" width="31" height="31" viewBox="0 0 31 31"><path d="M11 2 C5 2 6 5 6 11 C6 14 5 15.5 2 15.5 C5 15.5 6 17 6 20 C6 26 5 29 11 29 M20 2 C26 2 25 5 25 11 C25 14 26 15.5 29 15.5 C26 15.5 25 17 25 20 C25 26 26 29 20 29" stroke="#cfcfd1" stroke-width="3" fill="none" stroke-linecap="round"/></svg>
<div class="t s" style="left:2562.00px;top:955.41px;font-size:25.5px;color:#bfbfc2;">Style Editor</div>
<svg class="a" style="left:2723px;top:951px" width="33" height="32" viewBox="0 0 33 32"><path d="M5 27 A14 14 0 1 1 28 27" stroke="#bdbdc0" stroke-width="3.6" fill="none" stroke-linecap="round" stroke-linejoin="round"/><path d="M16.5 24 L21 13" stroke="#bdbdc0" stroke-width="3.6" fill="none" stroke-linecap="round" stroke-linejoin="round"/><circle cx="16" cy="24.5" r="3.2" fill="#cfcfd1"/></svg>
<div class="t s" style="left:2768.50px;top:955.41px;font-size:25.5px;color:#bfbfc2;">Performance</div>
<svg class="a" style="left:2945px;top:953px" width="32" height="32" viewBox="0 0 32 32"><rect x="9" y="2" width="14" height="28" rx="4" stroke="#bdbdc0" stroke-width="3.6" fill="none" stroke-linecap="round" stroke-linejoin="round"/><path d="M1 9 L5 10 M1 15 H5 M1 21 L5 20 M31 9 L27 10 M31 15 H27 M31 21 L27 20" stroke="#bdbdc0" stroke-width="3.6" fill="none" stroke-linecap="round" stroke-linejoin="round"/></svg>
<div class="t s" style="left:2990.00px;top:955.41px;font-size:25.5px;color:#bfbfc2;">Memory</div>
<svg class="a" style="left:3108px;top:955px" width="16" height="26" viewBox="0 0 16 26"><path d="M2 2 L13 13 L2 24" stroke="#bdbdc0" stroke-width="3.6" fill="none" stroke-linecap="round" stroke-linejoin="round"/></svg>
<svg class="a" style="left:1741.5px;top:1010.5px" width="25" height="25" viewBox="0 0 25 25"><circle cx="10" cy="10" r="8" stroke="#8f8f9d" stroke-width="2.8" fill="none"/><path d="M16 16 L23 23" stroke="#8f8f9d" stroke-width="3" stroke-linecap="round"/></svg>
<div class="t s" style="left:1773.00px;top:1011.78px;font-size:22.7px;color:#8c8c90;">Search HTML</div>
<div class="a" style="left:2458.5px;top:1006px;width:1.5px;height:32px;background:#4a4a4f;"></div>
<svg class="a" style="left:2478px;top:1010px" width="24" height="24" viewBox="0 0 24 24"><path d="M12 1 V23 M1 12 H23" stroke="#cfcfd1" stroke-width="2.8"/></svg>
<svg class="a" style="left:2532px;top:1004px" width="30" height="30" viewBox="0 0 30 30"><path d="M3 24 L17 10 L21 14 L7 28 L3 28 Z" stroke="#cfcfd1" stroke-width="2.2" fill="none" stroke-linejoin="round"/><path d="M14 7 L24 17 M18 11 L23 6 a2.8 2.8 0 0 1 4 4 L22 15" stroke="#cfcfd1" stroke-width="3" fill="none" stroke-linecap="round"/></svg>
<div class="a" style="left:1726px;top:1045.5px;width:853px;height:1.5px;background:#38383d;"></div>
<div class="a" style="left:1726px;top:1144px;width:853px;height:32px;background:#2c5291;"></div>
<div class="t m" style="left:1760.40px;top:1052.95px;font-size:24.2px;color:#b1b1b3;transform:scaleX(0.9091);transform-origin:0 0;font-style:italic;"><span style="color:#b1b1b3">&lt;!DOCTYPE html&gt;</span></div>
<div class="t m" style="left:1760.40px;top:1085.45px;font-size:24.2px;color:#b1b1b3;transform:scaleX(0.9091);transform-origin:0 0;"><span style="color:#b1b1b3">&lt;</span><span style="color:#75bfff">html</span><span style="color:#b1b1b3">&gt;</span></div>
<div class="a" style="left:1850px;top:1084.5px;width:76.59999999999991px;height:22.799999999999955px;border:2px solid #6a6a70;border-radius:7px;box-sizing:border-box;"></div>
<div class="t m" style="left:1888.30px;top:1088.48px;font-size:17.5px;color:#d7d7db;left:1288.30px;width:1200px;text-align:center;">scroll</div>
<svg class="a" style="left:1764px;top:1118px" width="12" height="16" viewBox="0 0 12 16"><path d="M1 1 L11 8 L1 15 Z" fill="#8f8f9d"/></svg>
<div class="t m" style="left:1782.50px;top:1116.95px;font-size:24.2px;color:#b1b1b3;transform:scaleX(0.9091);transform-origin:0 0;"><span style="color:#8f8f95">&lt;head&gt;</span></div>
<div class="a" style="left:1866px;top:1118.8px;width:27.5px;height:18.5px;border:2px solid #6a6a70;border-radius:7px;box-sizing:border-box;"></div>
<div class="a" style="left:1868px;top:1120.8px;width:23.5px;height:14.5px;background:#3b3b40;border-radius:5px;"></div>
<svg class="a" style="left:1869.8px;top:1125.5px" width="20" height="5"><circle cx="3" cy="2.5" r="2.2" fill="#e0e0e2"/><circle cx="10" cy="2.5" r="2.2" fill="#e0e0e2"/><circle cx="17" cy="2.5" r="2.2" fill="#e0e0e2"/></svg>
<div class="t m" style="left:1898.00px;top:1116.95px;font-size:24.2px;color:#b1b1b3;transform:scaleX(0.9091);transform-origin:0 0;"><span style="color:#8f8f95">&lt;/head&gt;</span></div>
<svg class="a" style="left:1760px;top:1154px" width="18" height="13" viewBox="0 0 18 13"><path d="M1 1 L17 1 L9 12 Z" fill="#ffffff"/></svg>
<div class="t m" style="left:1782.50px;top:1148.95px;font-size:24.2px;color:#b1b1b3;transform:scaleX(0.9091);transform-origin:0 0;"><span style="color:#fbfbfe">&lt;body&gt;</span></div>
<div class="a" style="left:1872.6px;top:1148.8px;width:97.80000000000018px;height:22.200000000000045px;border:2px solid #6a6a70;border-radius:7px;box-sizing:border-box;"></div>
<div class="t m" style="left:1921.50px;top:1152.48px;font-size:17.5px;color:#d7d7db;left:1321.50px;width:1200px;text-align:center;">overflow</div>
<div class="a" style="left:1766px;top:1180.6px;width:3px;height:146.4px;background:#3b5fa0;"></div>
<div class="t m" style="left:1804.00px;top:1181.55px;font-size:24.2px;color:#b1b1b3;transform:scaleX(0.9091);transform-origin:0 0;"><span style="color:#939395">&lt;script src=&quot;</span><span style="color:#939395;text-decoration:underline">/resources/labheader</span></div>
<div class="t m" style="left:1804.00px;top:1207.95px;font-size:24.2px;color:#b1b1b3;transform:scaleX(0.9091);transform-origin:0 0;"><span style="color:#939395;text-decoration:underline">/js/labHeader.js</span><span style="color:#939395">&quot;&gt;&lt;/script&gt;</span></div>
<svg class="a" style="left:1786px;top:1242px" width="12" height="16" viewBox="0 0 12 16"><path d="M1 1 L11 8 L1 15 Z" fill="#8f8f9d"/></svg>
<div class="t m" style="left:1804.00px;top:1241.55px;font-size:24.2px;color:#b1b1b3;transform:scaleX(0.9091);transform-origin:0 0;"><span style="color:#b1b1b3">&lt;</span><span style="color:#75bfff">div</span><span style="color:#b1b1b3"> </span><span style="color:#ff7de9">id</span><span style="color:#b1b1b3">=&quot;</span><span style="color:#b98eff">academyLabHeader</span><span style="color:#b1b1b3">&quot;&gt;</span></div>
<div class="a" style="left:2166.5px;top:1242.5px;width:27.0px;height:18.5px;border:2px solid #6a6a70;border-radius:7px;box-sizing:border-box;"></div>
<div class="a" style="left:2168.5px;top:1244.5px;width:23.0px;height:14.5px;background:#3b3b40;border-radius:5px;"></div>
<svg class="a" style="left:2170.0px;top:1249.2px" width="20" height="5"><circle cx="3" cy="2.5" r="2.2" fill="#e0e0e2"/><circle cx="10" cy="2.5" r="2.2" fill="#e0e0e2"/><circle cx="17" cy="2.5" r="2.2" fill="#e0e0e2"/></svg>
<div class="t m" style="left:2198.50px;top:1241.55px;font-size:24.2px;color:#b1b1b3;transform:scaleX(0.9091);transform-origin:0 0;"><span style="color:#b1b1b3">&lt;/</span><span style="color:#75bfff">div</span><span style="color:#b1b1b3">&gt;</span></div>
<svg class="a" style="left:1786px;top:1275px" width="12" height="16" viewBox="0 0 12 16"><path d="M1 1 L11 8 L1 15 Z" fill="#8f8f9d"/></svg>
<div class="t m" style="left:1804.00px;top:1273.95px;font-size:24.2px;color:#b1b1b3;transform:scaleX(0.9091);transform-origin:0 0;"><span style="color:#b1b1b3">&lt;</span><span style="color:#75bfff">div</span><span style="color:#b1b1b3"> </span><span style="color:#ff7de9">theme</span><span style="color:#b1b1b3">=&quot;&quot;</span><span style="color:#b1b1b3">&gt;</span></div>
<div class="a" style="left:1994px;top:1275px;width:27.5px;height:18.5px;border:2px solid #6a6a70;border-radius:7px;box-sizing:border-box;"></div>
<div class="a" style="left:1996px;top:1277px;width:23.5px;height:14.5px;background:#3b3b40;border-radius:5px;"></div>
<svg class="a" style="left:1997.8px;top:1281.8px" width="20" height="5"><circle cx="3" cy="2.5" r="2.2" fill="#e0e0e2"/><circle cx="10" cy="2.5" r="2.2" fill="#e0e0e2"/><circle cx="17" cy="2.5" r="2.2" fill="#e0e0e2"/></svg>
<div class="t m" style="left:2026.00px;top:1273.95px;font-size:24.2px;color:#b1b1b3;transform:scaleX(0.9091);transform-origin:0 0;"><span style="color:#b1b1b3">&lt;/</span><span style="color:#75bfff">div</span><span style="color:#b1b1b3">&gt;</span></div>
<div class="t m" style="left:1782.50px;top:1304.95px;font-size:24.2px;color:#b1b1b3;transform:scaleX(0.9091);transform-origin:0 0;"><span style="color:#b1b1b3">&lt;/</span><span style="color:#75bfff">body</span><span style="color:#b1b1b3">&gt;</span></div>
<div class="t m" style="left:1760.40px;top:1336.45px;font-size:24.2px;color:#b1b1b3;transform:scaleX(0.9091);transform-origin:0 0;"><span style="color:#b1b1b3">&lt;/</span><span style="color:#75bfff">html</span><span style="color:#b1b1b3">&gt;</span></div>
<div class="a" style="left:1726px;top:1512px;width:853px;height:2px;background:#38383d;"></div>
<div class="t s" style="left:1746.50px;top:1525.81px;font-size:23.5px;color:#fbfbfe;">html</div>
<svg class="a" style="left:1805px;top:1528px" width="12" height="18" viewBox="0 0 12 18"><path d="M2 2 L9 9 L2 16" stroke="#a8a8b8" stroke-width="2.6" fill="none"/></svg>
<div class="t s" style="left:1831.00px;top:1525.81px;font-size:23.5px;color:#75bfff;">body</div>
<div class="a" style="left:1726px;top:1562px;width:1396px;height:3px;background:#38383d;"></div>
<div class="a" style="left:1742px;top:1574.5px;width:106px;height:45px;background:#38383d;border-radius:6px;"></div>
<svg class="a" style="left:1762px;top:1580px" width="20" height="24" viewBox="0 0 20 24"><path d="M2 2 L18 12 L2 22 Z" stroke="#cfcfd1" stroke-width="2.6" fill="none" stroke-linejoin="round"/></svg>
<div class="t s" style="left:1793.00px;top:1583.38px;font-size:22px;color:#cfcfd1;">Run</div>
<div class="t s" style="left:2423.50px;top:1581.84px;font-size:25px;color:#cfcfd1;">{</div>
<div class="t s" style="left:2441.00px;top:1581.84px;font-size:25px;color:#cfcfd1;">}</div>
<div class="a" style="left:2468px;top:1574.5px;width:1.5px;height:40px;background:#4a4a4f;"></div>
<svg class="a" style="left:2489px;top:1585px" width="22" height="15" viewBox="0 0 22 15"><path d="M2 12 L11 3 L20 12" stroke="#bdbdc0" stroke-width="3.6" fill="none" stroke-linecap="round" stroke-linejoin="round"/></svg>
<svg class="a" style="left:2544.5px;top:1585px" width="22" height="15" viewBox="0 0 22 15"><path d="M2 3 L11 12 L20 3" stroke="#bdbdc0" stroke-width="3.6" fill="none" stroke-linecap="round" stroke-linejoin="round"/></svg>
<svg class="a" style="left:2597px;top:1579px" width="29" height="29" viewBox="0 0 29 29"><circle cx="12" cy="12" r="10" stroke="#bdbdc0" stroke-width="3.6" fill="none" stroke-linecap="round" stroke-linejoin="round"/><path d="M12 6 V12 H17 M19.5 19.5 L27 27" stroke="#bdbdc0" stroke-width="3.6" fill="none" stroke-linecap="round" stroke-linejoin="round"/></svg>
<div class="a" style="left:2643px;top:1574.5px;width:1.5px;height:40px;background:#4a4a4f;"></div>
<svg class="a" style="left:2663px;top:1583px" width="23" height="23" viewBox="0 0 23 23"><path d="M2 2 L21 21 M21 2 L2 21" stroke="#cfcfd1" stroke-width="3"/></svg>
<div class="a" style="left:2708.5px;top:1564px;width:1.5px;height:50px;background:#4a4a4f;"></div>
<svg class="a" style="left:2730px;top:1578px" width="26" height="30" viewBox="0 0 26 30"><path d="M1 5 H25 M9 5 V2 H17 V5 M4 6 L6 26 a2 2 0 0 0 2 2 H18 a2 2 0 0 0 2 -2 L22 6 M10 10 V24 M13 10 V24 M16 10 V24" stroke="#cfcfd1" stroke-width="2.6" fill="none"/></svg>
<div class="a" style="left:2774.5px;top:1574.5px;width:1.5px;height:40px;background:#4a4a4f;"></div>
<svg class="a" style="left:2798px;top:1584px" width="20" height="21" viewBox="0 0 20 21"><path d="M1 2 H19 L12 11 V19 L8 17 V11 Z" stroke="#8f8f9d" stroke-width="2.4" fill="none" stroke-linejoin="round"/></svg>
<div class="t s" style="left:2826.50px;top:1582.94px;font-size:23.7px;color:#8c8c90;">Filter Output</div>
<div class="a" style="left:2579px;top:997px;width:172px;height:566px;background:#18181a;"></div>
<div class="a" style="left:2579px;top:997px;width:172px;height:94px;background:#232327;"></div>
<div class="a" style="left:2578.5px;top:997px;width:1.5px;height:566px;background:#38383d;"></div>
<div class="a" style="left:2750.5px;top:997px;width:1.5px;height:566px;background:#38383d;"></div>
<svg class="a" style="left:2598px;top:1011px" width="20" height="22" viewBox="0 0 20 22"><path d="M1 2 H19 L12 11 V19 L8 17 V11 Z" stroke="#8f8f9d" stroke-width="2.4" fill="none" stroke-linejoin="round"/></svg>
<div class="a" style="left:2580px;top:997px;width:170px;height:566px;overflow:hidden">
<div class="t s" style="left:47.00px;top:13.19px;font-size:23.4px;color:#8f8f9d;">Filter Styles</div>
<div class="a" style="left:0px;top:48.5px;width:170px;height:1.5px;background:#38383d;"></div>
<div class="t s" style="left:12.00px;top:59.95px;font-size:22.5px;color:#fbfbfe;font-weight:bold;">:hov</div>
<div class="t s" style="left:72.00px;top:59.95px;font-size:22.5px;color:#fbfbfe;font-weight:bold;">.cls</div>
<svg class="a" style="left:134px;top:60px" width="24" height="24"><path d="M12 1 V23 M1 12 H23" stroke="#fbfbfe" stroke-width="3"/></svg>
<div class="a" style="left:0px;top:93px;width:170px;height:1.5px;background:#38383d;"></div>
<div class="t m" style="left:114.00px;top:103.95px;font-size:24.2px;color:#c8c8cc;transform:scaleX(0.9091);transform-origin:0 0;"><span style="color:#939395">inline</span></div>
<div class="t m" style="left:9.00px;top:132.95px;font-size:24.2px;color:#c8c8cc;transform:scaleX(0.9091);transform-origin:0 0;"><span style="color:#b1b1b3">element {</span></div>
<svg class="a" style="left:146px;top:130px" width="26" height="26"><rect x="5" y="5" width="16" height="16" rx="2" stroke="#b1b1b3" stroke-width="2.6" fill="none"/><path d="M13 0 V5 M13 21 V26 M0 13 H5 M21 13 H26" stroke="#b1b1b3" stroke-width="2.4"/></svg>
<div class="t m" style="left:9.00px;top:162.35px;font-size:24.2px;color:#c8c8cc;transform:scaleX(0.9091);transform-origin:0 0;"><span style="color:#b1b1b3">}</span></div>
<div class="a" style="left:0px;top:190.5px;width:170px;height:1.5px;background:#38383d;"></div>
<div class="t m" style="left:33.00px;top:201.25px;font-size:24.2px;color:#c8c8cc;transform:scaleX(0.9091);transform-origin:0 0;"><span style="color:#939395">labs.css:56</span></div>
<div class="t m" style="left:9.00px;top:231.25px;font-size:24.2px;color:#c8c8cc;transform:scaleX(0.9091);transform-origin:0 0;"><span style="color:#b1b1b3">body</span></div>
<svg class="a" style="left:73px;top:228px" width="26" height="26"><rect x="5" y="5" width="16" height="16" rx="2" stroke="#b1b1b3" stroke-width="2.6" fill="none"/><path d="M13 0 V5 M13 21 V26 M0 13 H5 M21 13 H26" stroke="#b1b1b3" stroke-width="2.4"/></svg>
<div class="t m" style="left:115.00px;top:231.25px;font-size:24.2px;color:#c8c8cc;transform:scaleX(0.9091);transform-origin:0 0;"><span style="color:#b1b1b3">{</span></div>
<div class="t m" style="left:2.00px;top:290.55px;font-size:24.2px;color:#c8c8cc;transform:scaleX(0.9091);transform-origin:0 0;"><span style="color:#75bfff">background</span><span style="color:#b1b1b3">:</span></div>
<svg class="a" style="left:157px;top:289px" width="12" height="16"><path d="M1 1 L11 8 L1 15 Z" fill="#8f8f9d"/></svg>
<div class="a" style="left:69px;top:317px;width:24px;height:24px;border-radius:50%;background:#fff;border:2px solid #555;box-sizing:border-box"></div>
<div class="t m" style="left:102.00px;top:319.45px;font-size:24.2px;color:#c8c8cc;transform:scaleX(0.9091);transform-origin:0 0;"><span style="color:#ff7de9">#fff</span></div>
<div class="t m" style="left:72.00px;top:347.55px;font-size:24.2px;color:#c8c8cc;transform:scaleX(0.9091);transform-origin:0 0;"><span style="color:#ff7de9">!importa</span></div>
<div class="t m" style="left:71.00px;top:376.75px;font-size:24.2px;color:#c8c8cc;transform:scaleX(0.9091);transform-origin:0 0;"><span style="color:#ff7de9">nt</span><span style="color:#b1b1b3">;</span></div>
<div class="t m" style="left:50.00px;top:404.85px;font-size:24.2px;color:#c8c8cc;transform:scaleX(0.9091);transform-origin:0 0;"><span style="color:#75bfff">color</span><span style="color:#b1b1b3">:</span></div>
<div class="a" style="left:139.5px;top:402px;width:24.5px;height:24.5px;border-radius:50%;background:#333332;border:2px solid #8a8a8a;box-sizing:border-box"></div>
<div class="t m" style="left:70.00px;top:433.65px;font-size:24.2px;color:#c8c8cc;transform:scaleX(0.9091);transform-origin:0 0;"><span style="color:#ff7de9">#333332</span><span style="color:#b1b1b3">;</span></div>
<div class="t m" style="left:50.00px;top:461.75px;font-size:24.2px;color:#c8c8cc;transform:scaleX(0.9091);transform-origin:0 0;"><span style="color:#75bfff">font-size</span><span style="color:#b1b1b3">:</span></div>
<div class="t m" style="left:71.00px;top:489.75px;font-size:24.2px;color:#c8c8cc;transform:scaleX(0.9091);transform-origin:0 0;"><span style="color:#ff7de9">16px</span><span style="color:#b1b1b3">;</span></div>
<div class="t m" style="left:48.00px;top:517.85px;font-size:24.2px;color:#c8c8cc;transform:scaleX(0.9091);transform-origin:0 0;text-decoration:line-through;"><span style="color:#939395">-webkit-</span></div>
<div class="t m" style="left:71.00px;top:545.95px;font-size:24.2px;color:#c8c8cc;transform:scaleX(0.9091);transform-origin:0 0;text-decoration:line-through;"><span style="color:#939395">font-</span></div>
</div>
<div class="a" style="left:2752px;top:997px;width:370px;height:49px;background:#0c0c0d;"></div>
<div class="a" style="left:2808px;top:997.5px;width:120px;height:4.5px;background:#3c8aff;"></div>
<svg class="a" style="left:2765.5px;top:1010.5px" width="29" height="23" viewBox="0 0 29 23"><rect x="1.5" y="1.5" width="25" height="20" stroke="#cfcfd1" stroke-width="2.4" fill="none"/><path d="M18 1.5 V21.5" stroke="#cfcfd1" stroke-width="2.4"/><path d="M6 6.5 L13 11.5 L6 16.5 Z" fill="#cfcfd1"/></svg>
<div class="t s" style="left:2831.00px;top:1008.84px;font-size:25px;color:#fbfbfe;">Layout</div>
<div class="t s" style="left:2950.70px;top:1008.84px;font-size:25px;color:#cfcfd1;">Computed</div>
<div class="t s" style="left:3113.00px;top:1008.84px;font-size:25px;color:#cfcfd1;">Changes</div>
<div class="a" style="left:2752px;top:1045.5px;width:370px;height:1.5px;background:#38383d;"></div>
<div class="a" style="left:2752px;top:1047px;width:370px;height:516px;background:#18181a;"></div>
<div class="a" style="left:2752px;top:1047px;width:370px;height:49.5px;background:#232327;"></div>
<svg class="a" style="left:2765.5px;top:1068px" width="18" height="11" viewBox="0 0 18 11"><path d="M1 1 L17 1 L9 10 Z" fill="#8f8f9d"/></svg>
<div class="t s" style="left:2793.00px;top:1059.78px;font-size:24.6px;color:#cfcfd1;">Flexbox</div>
<div class="a" style="left:2752px;top:1096.5px;width:370px;height:1.5px;background:#38383d;"></div>
<div class="t s" style="left:2795.00px;top:1114.05px;font-size:24.4px;color:#cfcfd1;font-style:italic;">Select a Flex container or item to continue.</div>
<div class="a" style="left:2752px;top:1154.5px;width:370px;height:1.5px;background:#38383d;"></div>
<div class="a" style="left:2752px;top:1156px;width:370px;height:47.5px;background:#232327;"></div>
<svg class="a" style="left:2765.5px;top:1177px" width="18" height="11" viewBox="0 0 18 11"><path d="M1 1 L17 1 L9 10 Z" fill="#8f8f9d"/></svg>
<div class="t s" style="left:2793.00px;top:1167.18px;font-size:24.6px;color:#cfcfd1;">Grid</div>
<div class="a" style="left:2752px;top:1203.5px;width:370px;height:1.5px;background:#38383d;"></div>
<div class="t s" style="left:2795.00px;top:1221.35px;font-size:24.4px;color:#cfcfd1;font-style:italic;">CSS Grid is not in use on this page</div>
<div class="a" style="left:2752px;top:1262.5px;width:370px;height:1.5px;background:#38383d;"></div>
<div class="a" style="left:2752px;top:1264px;width:370px;height:48.5px;background:#232327;"></div>
<svg class="a" style="left:2765.5px;top:1285px" width="18" height="11" viewBox="0 0 18 11"><path d="M1 1 L17 1 L9 10 Z" fill="#8f8f9d"/></svg>
<div class="t s" style="left:2793.00px;top:1275.88px;font-size:24.6px;color:#cfcfd1;">Box Model</div>
<div class="a" style="left:2752px;top:1312.5px;width:370px;height:1.5px;background:#38383d;"></div>
<div class="a" style="left:2752px;top:1314px;width:370px;height:248px;overflow:hidden">
<div class="a" style="left:76px;top:49px;width:400px;height:300px;background:#737550;border:2px dashed #dcd44a;box-sizing:border-box;"></div>
<div class="a" style="left:121px;top:94px;width:400px;height:300px;background:#38383d;"></div>
<div class="a" style="left:131px;top:104px;width:400px;height:300px;background:#6656a3;"></div>
<div class="a" style="left:130px;top:94px;width:88px;height:29px;background:#38383d;border-radius:0 0 6px 0;"></div>
<div class="a" style="left:185px;top:156.5px;width:400px;height:38.5px;background:#4c78a3;border:2px dashed #5ab0f0;box-sizing:border-box;"></div>
<div class="t m" style="left:96.00px;top:59.45px;font-size:24.2px;color:#ffffff;transform:scaleX(0.9091);transform-origin:0 0;">margin</div>
<div class="t m" style="left:337.00px;top:52.85px;font-size:24.2px;color:#ffffff;transform:scaleX(0.9091);transform-origin:0 0;">0</div>
<div class="a" style="left:332px;top:84px;width:23px;height:29px;background:#38383d;border-radius:6px;"></div>
<div class="t m" style="left:337.00px;top:87.45px;font-size:24.2px;color:#ffffff;transform:scaleX(0.9091);transform-origin:0 0;">0</div>
<div class="t m" style="left:130.50px;top:97.45px;font-size:24.2px;color:#ffffff;transform:scaleX(0.9091);transform-origin:0 0;">border</div>
<div class="t m" style="left:157.00px;top:129.25px;font-size:24.2px;color:#ffffff;transform:scaleX(0.9091);transform-origin:0 0;">padding</div>
<div class="t m" style="left:337.00px;top:120.45px;font-size:24.2px;color:#ffffff;transform:scaleX(0.9091);transform-origin:0 0;">0</div>
<div class="t m" style="left:91.50px;top:164.25px;font-size:24.2px;color:#ffffff;transform:scaleX(0.9091);transform-origin:0 0;">0</div>
<div class="a" style="left:115px;top:161.70000000000005px;width:24px;height:28px;background:#38383d;border-radius:6px;"></div>
<div class="t m" style="left:119.00px;top:164.25px;font-size:24.2px;color:#ffffff;transform:scaleX(0.9091);transform-origin:0 0;">0</div>
<div class="t m" style="left:155.00px;top:164.25px;font-size:24.2px;color:#ffffff;transform:scaleX(0.9091);transform-origin:0 0;">0</div>
<div class="t m" style="left:284.50px;top:164.25px;font-size:24.2px;color:#ffffff;transform:scaleX(0.9091);transform-origin:0 0;">858×515</div>
<div class="t m" style="left:337.00px;top:206.85px;font-size:24.2px;color:#ffffff;transform:scaleX(0.9091);transform-origin:0 0;">0</div>
<div class="a" style="left:332px;top:239px;width:23px;height:29px;background:#38383d;border-radius:6px;"></div>
</div>
</body></html>
